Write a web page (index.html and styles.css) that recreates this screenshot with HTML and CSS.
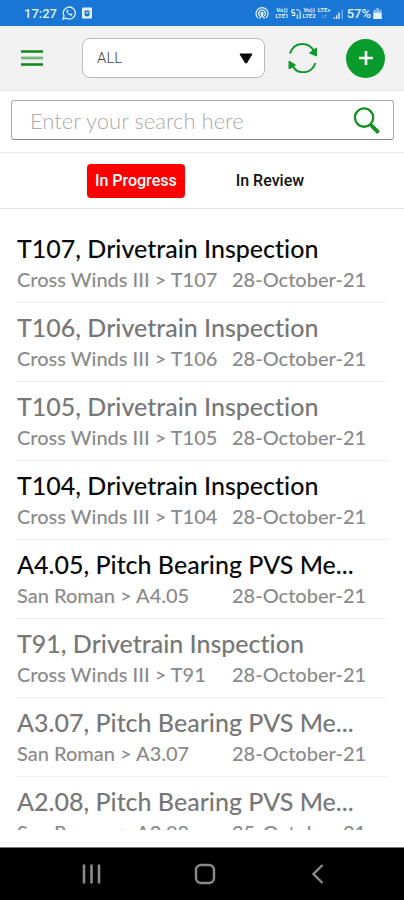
FILE: index.html
```
<!DOCTYPE html>
<html lang="en">
<head>
<meta charset="utf-8">
<meta name="viewport" content="width=device-width, initial-scale=1">
<title>Inspections</title>
<link rel="stylesheet" href="styles.css">
</head>
<body>
<div class="status">
  <span class="clock">17:27</span>
  <svg class="s14" viewBox="0 0 14 14" fill="none" stroke="currentColor" stroke-width="1.3"><path d="M1 13l1-3.2A6 6 0 1 1 4.300 12.200z"/><path d="M4.500 4c-.5 2.500 2.500 6 5.500 5.600l.3-1.600-1.600-.7-.8.8C6.800 7.600 6.200 7 5.800 6l.8-.8L6 3.700z" fill="currentColor" stroke="none"/></svg>
  <svg class="s12" viewBox="0 0 10 12"><rect x="0" y="0.500" width="10" height="11" rx="1" fill="currentColor"/><path d="M2.500 3.500h5v3.500a2.500 2.500 0 0 1-5 0z" fill="#1976d5"/><path d="M4 5l1 1.500L6.500 5" stroke="#fff" fill="none"/></svg>
  <span class="spacer"></span>
  <svg class="s14 hotspot" viewBox="0 0 14 14" fill="none" stroke="currentColor" stroke-width="1.300"><path d="M3 12a6 6 0 1 1 8 0M4.700 10a3.400 3.400 0 1 1 4.600 0"/><circle cx="7" cy="7.500" r="1" fill="currentColor"/><path d="M4.500 12.500L7 9l2.500 3.500"/></svg>
  <span class="net"><span>Vo))</span><span>LTE1</span></span>
  <svg class="sig" viewBox="0 0 11 12" fill="none" stroke="currentColor" stroke-width="1.300"><path d="M1 2h3M1 2v3h3v3H1M7 7v5M10 3v9M6 2h3"/></svg>
  <span class="net"><span>Vo))</span><span>LTE2</span></span>
  <span class="net"><span>LTE+</span><span>↓↑</span></span>
  <svg class="sig" viewBox="0 0 11 12" fill="none" stroke="currentColor" stroke-width="1.500"><path d="M1.500 10v2M4 8v4M6.500 5v7"/><path d="M10 2v10" opacity=".5"/></svg>
  <span class="pct">57%</span>
  <svg class="bat" viewBox="0 0 9 12"><path d="M3 0h3v2h3v10H0V2h3z" fill="currentColor" opacity=".5"/><path d="M0 5h9v7H0z" fill="currentColor"/></svg>
</div>
<header class="bar">
  <button class="icon menu" aria-label="Menu"><svg viewBox="0 0 22 16"><path d="M0 1.500h22M0 14.500h22" stroke="#12871b" stroke-width="2.400"/><path d="M0 8h22" stroke="#77b67c" stroke-width="2.800"/></svg></button>
  <div class="pick">
    <select aria-label="Filter"><option>ALL</option></select>
    <svg class="caret" viewBox="0 0 14 11"><path d="M1 1h12L7.500 10h-1z" fill="#000" stroke="#000" stroke-linejoin="round"/></svg>
  </div>
  <button class="icon sync" aria-label="Refresh"><svg viewBox="0 0 30 30" fill="none" stroke="#119a2b" stroke-width="2"><path d="M2 10.500C6 -1.500 21 -2 26 8.500M27.500 20C23 32 9 32 4 22"/><path d="M28.500 5v8l-7-3z M1 26v-8l6.500 4z" fill="#119a2b" stroke-width="1"/></svg></button>
  <button class="icon add" aria-label="Add"><svg viewBox="0 0 16 16"><path d="M8 1v14M1 8h14" stroke="#fff" stroke-width="2.600"/></svg></button>
</header>
<form class="search">
  <input type="text" placeholder="Enter your search here" aria-label="Search">
  <button class="icon find" type="button" aria-label="Search"><svg viewBox="0 0 28 28" fill="none" stroke="#119020"><circle cx="11.500" cy="11" r="9.500" stroke-width="2.400"/><path d="M18 18l2 2" stroke-width="2.800"/><path d="M19 19l7.500 7.500" stroke-width="4"/></svg></button>
</form>
<nav class="tabs">
  <button class="tab active">In Progress</button>
  <button class="tab">In Review</button>
</nav>
<main class="list">
  <article class="row strong"><h2>T107, Drivetrain Inspection</h2><p><span>Cross Winds III &gt; T107</span><time>28-October-21</time></p></article>
  <article class="row"><h2>T106, Drivetrain Inspection</h2><p><span>Cross Winds III &gt; T106</span><time>28-October-21</time></p></article>
  <article class="row"><h2>T105, Drivetrain Inspection</h2><p><span>Cross Winds III &gt; T105</span><time>28-October-21</time></p></article>
  <article class="row strong"><h2>T104, Drivetrain Inspection</h2><p><span>Cross Winds III &gt; T104</span><time>28-October-21</time></p></article>
  <article class="row strong"><h2>A4.05, Pitch Bearing PVS Me...</h2><p><span>San Roman &gt; A4.05</span><time>28-October-21</time></p></article>
  <article class="row"><h2>T91, Drivetrain Inspection</h2><p><span>Cross Winds III &gt; T91</span><time>28-October-21</time></p></article>
  <article class="row"><h2>A3.07, Pitch Bearing PVS Me...</h2><p><span>San Roman &gt; A3.07</span><time>28-October-21</time></p></article>
  <article class="row"><h2>A2.08, Pitch Bearing PVS Me...</h2><p><span>San Roman &gt; A2.08</span><time>25-October-21</time></p></article>
</main>
<footer class="nav">
  <button class="icon" aria-label="Recent apps"><svg viewBox="0 0 22 22"><path d="M3 1.500v19M10.500 1.500v19M18 1.500v19" stroke="#8a8a8a" stroke-width="2.600"/></svg></button>
  <button class="icon" aria-label="Home"><svg viewBox="0 0 22 22"><rect x="2" y="2" width="18" height="18" rx="5" fill="none" stroke="#8a8a8a" stroke-width="2.400"/></svg></button>
  <button class="icon" aria-label="Back"><svg viewBox="0 0 22 22"><path d="M15.500 2L6.500 11l9 9" fill="none" stroke="#8a8a8a" stroke-width="2.400"/></svg></button>
</footer>
</body>
</html>
```
FILE: styles.css
```
* { box-sizing: border-box; }

body {
  margin: 0;
  height: 100vh;
  display: flex;
  flex-direction: column;
  background: #fff;
  font-family: Lato, sans-serif;
  font-variant-ligatures: none;
  overflow: hidden;
}

button { border: 0; padding: 0; background: none; font: inherit; color: inherit; }
svg { display: block; }

.status {
  flex: none;
  height: 26px;
  padding: 0 22px 0 24px;
  display: flex;
  align-items: center;
  gap: 2px;
  background: #1976d5;
  color: #e4f0fc;
  font: 500 13px Roboto, sans-serif;
}
.clock { margin-right: 3px; }
.s14 { width: 14px; height: 14px; }
.s12 { width: 12px; height: 12px; margin-left: 3px; }
.hotspot { margin-right: 4px; }
.spacer { flex: 1; }
.net { display: grid; font-size: 6px; line-height: 6px; font-weight: 700; text-align: center; }
.sig { width: 10px; height: 11px; }
.pct { margin-left: 2px; }
.bat { width: 9px; height: 11px; }

.bar {
  flex: none;
  height: 65px;
  padding: 0 19px 0 21px;
  display: flex;
  align-items: center;
  background: #f2f2f2;
  border-bottom: 1px solid #e9e9e9;
}
.menu svg { width: 22px; height: 16px; }
.pick { position: relative; flex: 1; margin: 0 23px 0 39px; }
.pick select {
  appearance: none;
  display: block;
  width: 100%;
  height: 40px;
  padding: 0 14px;
  border: 1px solid #bbb;
  border-radius: 8px;
  background: #fff;
  color: #444;
  font: 300 15px Roboto, sans-serif;
}
.caret { position: absolute; right: 12px; top: 15px; width: 14px; height: 11px; pointer-events: none; }
.sync svg { width: 30px; height: 30px; }
.add {
  width: 39px;
  height: 39px;
  margin-left: 28px;
  display: grid;
  place-items: center;
  border-radius: 50%;
  background: #0a9b2d;
}
.add svg { width: 16px; height: 16px; }

.search {
  flex: none;
  height: 40px;
  margin: 9px 10px 12px 11px;
  display: flex;
  align-items: center;
  border: 1px solid #aaa;
  border-bottom-color: #888;
  border-radius: 3px;
  padding-right: 13px;
}
.search input {
  flex: 1;
  min-width: 0;
  border: 0;
  outline: 0;
  padding: 0 18px;
  background: none;
  font: 300 22px Lato, sans-serif;
}
.search input::placeholder { color: #aaa; }
.find svg { width: 27px; height: 27px; }

.tabs {
  flex: none;
  height: 57px;
  display: flex;
  align-items: center;
  justify-content: center;
  gap: 43px;
  padding-right: 5px;
  border-top: 1px solid #eaeaea;
  border-bottom: 1px solid #e6e6e6;
  font: 500 16px Roboto, sans-serif;
}
.tab { height: 34px; padding: 0 8px; border-radius: 4px; color: #111; }
.tab.active { background: #f00; color: #fff; }

.list { flex: 1; min-height: 0; overflow: hidden; margin: 15px 16px 17px; }
.row { height: 79px; padding: 8px 1px 0; border-bottom: 1px solid #f0f0f0; }
.row h2 {
  margin: 0 0 3px;
  height: 30px;
  overflow: hidden;
  white-space: nowrap;
  font-size: 25px;
  line-height: 32px;
  font-weight: 500;
  color: #777;
}
.row.strong h2 { color: #0a0a0a; }
.row p {
  margin: 0;
  display: grid;
  grid-template-columns: 215px 1fr;
  white-space: nowrap;
  font-size: 20px;
  line-height: 28px;
  font-weight: 500;
  color: #8a8a8a;
}

.nav {
  flex: none;
  height: 53px;
  display: flex;
  align-items: center;
  justify-content: center;
  gap: 91px;
  padding-left: 6px;
  background: #000;
  border-top: 1px solid #777;
}
.nav svg { width: 22px; height: 22px; }
```
